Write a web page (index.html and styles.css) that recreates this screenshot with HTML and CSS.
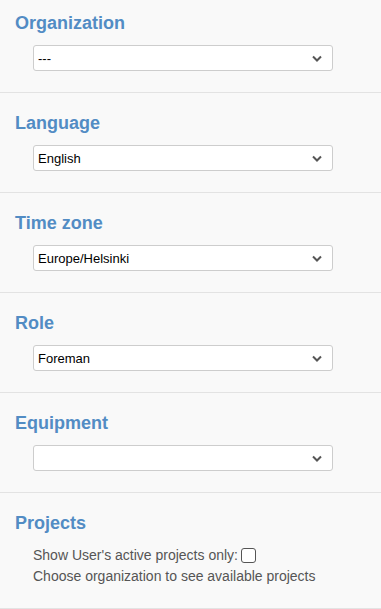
FILE: index.html
```html
<!DOCTYPE html>
<html lang="en">
<head>
    <meta charset="UTF-8">
    <meta name="viewport" content="width=device-width, initial-scale=1.0">
    <title>User settings</title>
    <link rel="stylesheet" href="styles.css">
</head>
<body>
    <div class="settings">
        <div class="section">
            <h2>Organization</h2>
            <div class="select-wrap">
                <select><option>---</option></select>
                <svg class="chevron" width="10" height="7" viewBox="0 0 10 7"><path d="M1 1.5 L5 5.5 L9 1.5" fill="none" stroke="#555" stroke-width="2"/></svg>
            </div>
        </div>
        <div class="section">
            <h2>Language</h2>
            <div class="select-wrap">
                <select><option>English</option></select>
                <svg class="chevron" width="10" height="7" viewBox="0 0 10 7"><path d="M1 1.5 L5 5.5 L9 1.5" fill="none" stroke="#555" stroke-width="2"/></svg>
            </div>
        </div>
        <div class="section">
            <h2>Time zone</h2>
            <div class="select-wrap">
                <select><option>Europe/Helsinki</option></select>
                <svg class="chevron" width="10" height="7" viewBox="0 0 10 7"><path d="M1 1.5 L5 5.5 L9 1.5" fill="none" stroke="#555" stroke-width="2"/></svg>
            </div>
        </div>
        <div class="section">
            <h2>Role</h2>
            <div class="select-wrap">
                <select><option>Foreman</option></select>
                <svg class="chevron" width="10" height="7" viewBox="0 0 10 7"><path d="M1 1.5 L5 5.5 L9 1.5" fill="none" stroke="#555" stroke-width="2"/></svg>
            </div>
        </div>
        <div class="section">
            <h2>Equipment</h2>
            <div class="select-wrap">
                <select><option></option></select>
                <svg class="chevron" width="10" height="7" viewBox="0 0 10 7"><path d="M1 1.5 L5 5.5 L9 1.5" fill="none" stroke="#555" stroke-width="2"/></svg>
            </div>
        </div>
        <div class="section projects">
            <h2>Projects</h2>
            <div class="projects-body">
                <label class="active-only">Show User's active projects only: <span class="checkbox"></span></label>
                <p>Choose organization to see available projects</p>
            </div>
        </div>
    </div>
</body>
</html>
```

FILE: styles.css
```css
* {
    margin: 0;
    padding: 0;
    box-sizing: border-box;
}
body {
    font-family: "Liberation Sans", Arial, Helvetica, sans-serif;
    background-color: #f9f9f9;
    color: #333;
}
.section {
    padding: 20px 15px 21px;
    border-bottom: 1px solid #e3e3e3;
}
.section:first-child {
    padding-top: 13px;
}
h2 {
    font-size: 18px;
    line-height: 20px;
    font-weight: bold;
    color: #528cc4;
    margin-bottom: 12px;
}
.select-wrap {
    position: relative;
    width: 300px;
    margin-left: 18px;
}
select {
    display: block;
    width: 100%;
    height: 26px;
    padding: 0 24px 0 4px;
    font-family: "Liberation Sans", Arial, sans-serif;
    font-size: 13px;
    color: #000;
    background-color: #fff;
    border: 1px solid #cdcdcd;
    border-radius: 3px;
    appearance: none;
    -webkit-appearance: none;
}
.chevron {
    position: absolute;
    right: 11px;
    top: 10px;
    pointer-events: none;
}
.projects {
    padding-bottom: 21px;
}
.projects h2 {
    margin-bottom: 12px;
}
.projects-body {
    margin-left: 18px;
    font-size: 14px;
    line-height: 21px;
    color: #555;
}
.active-only {
    display: flex;
    align-items: center;
    gap: 3px;
}
.checkbox {
    display: inline-block;
    width: 15px;
    height: 15px;
    border: 1px solid #555;
    border-radius: 3px;
    background-color: #fff;
}
```
